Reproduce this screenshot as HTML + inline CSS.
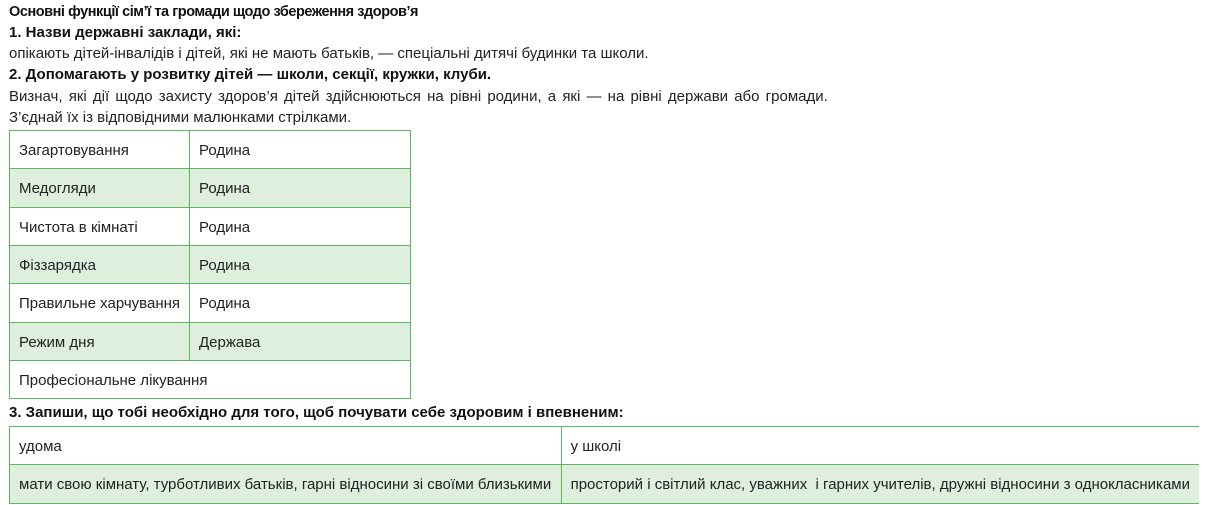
<!DOCTYPE html>
<html><head><meta charset="utf-8"><style>
body{margin:0;background:#fff;width:1208px;height:505px;overflow:hidden;font-family:"Liberation Sans","DejaVu Sans",sans-serif;color:#222;font-size:15px}
.l{position:absolute;left:9px;white-space:nowrap;line-height:20px}
b{font-weight:bold;color:#111}
table{position:absolute;border-collapse:collapse;left:9px}
td{border:1px solid #5cb85c;padding:1px 9px 0;white-space:nowrap;font-size:15px;color:#222}
tr.g td{background:#deefde}
</style></head><body>
<div class="l" style="top:2px;font-size:14.5px;letter-spacing:-0.45px"><b>Основні функції сім’ї та громади щодо збереження здоров’я</b></div>
<div class="l" style="top:23px"><b>1. Назви державні заклади, які:</b></div>
<div class="l" style="top:44px">опікають дітей-інвалідів і дітей, які не мають батьків, — спеціальні дитячі будинки та школи.</div>
<div class="l" style="top:65px"><b>2. Допомагають у розвитку дітей — школи, секції, кружки, клуби.</b></div>
<div class="l" style="top:87px;word-spacing:2px">Визнач, які дії щодо захисту здоров’я дітей здійснюються на рівні родини, а які — на рівні держави або громади.</div>
<div class="l" style="top:108px">З’єднай їх із відповідними малюнками стрілками.</div>
<table style="top:130px;width:402px">
<tr style="height:38px"><td style="width:160px">Загартовування</td><td>Родина</td></tr>
<tr class="g" style="height:39px"><td>Медогляди</td><td>Родина</td></tr>
<tr style="height:38px"><td>Чистота в кімнаті</td><td>Родина</td></tr>
<tr class="g" style="height:38px"><td>Фіззарядка</td><td>Родина</td></tr>
<tr style="height:39px"><td>Правильне харчування</td><td>Родина</td></tr>
<tr class="g" style="height:38px"><td>Режим дня</td><td>Держава</td></tr>
<tr style="height:38px"><td colspan="2">Професіональне лікування</td></tr>
</table>
<div class="l" style="top:403px"><b>3. Запиши, що тобі необхідно для того, щоб почувати себе здоровим і впевненим:</b></div>
<table style="top:426px;width:1190px">
<tr style="height:38px"><td style="width:535px">удома</td><td style="border-right:none">у школі</td></tr>
<tr class="g" style="height:39px"><td>мати свою кімнату, турботливих батьків, гарні відносини зі своїми близькими</td><td style="border-right:none">просторий і світлий клас, уважних &nbsp;і гарних учителів, дружні відносини з однокласниками</td></tr>
</table>
</body></html>
